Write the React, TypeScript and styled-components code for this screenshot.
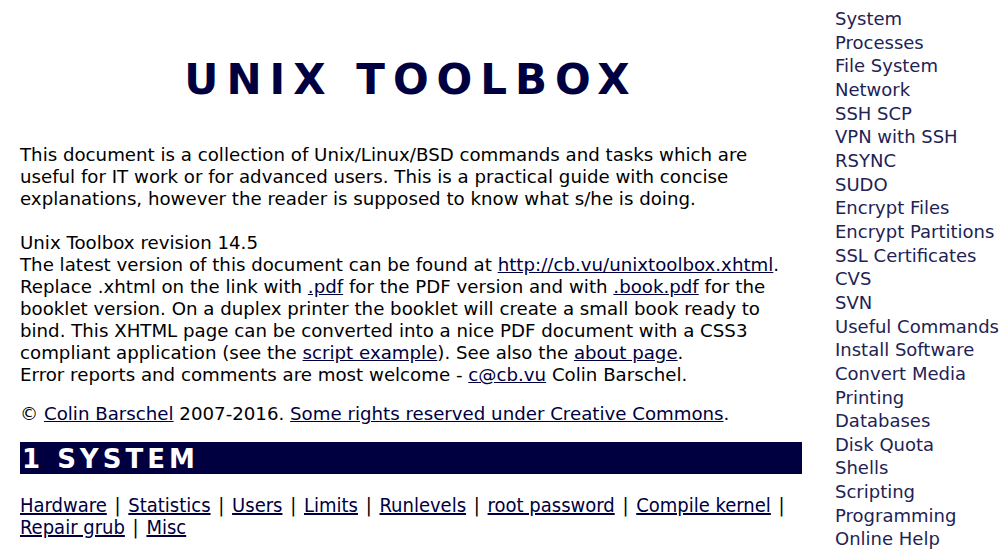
import styled, { createGlobalStyle } from 'styled-components';

const GlobalStyle = createGlobalStyle`
  html, body {
    margin: 0;
    padding: 0;
    background: #ffffff;
  }
  body {
    font-family: 'DejaVu Sans', Verdana, sans-serif;
    color: #000000;
  }
`;

const Page = styled.div`
  display: flex;
  width: 1006px;
  height: 552px;
  overflow: hidden;
`;

const Main = styled.div`
  width: 782px;
  flex-shrink: 0;
  margin-left: 20px;
  font-size: 18.2px;
  line-height: 22px;
`;

const Title = styled.h1`
  margin: 56px 0 40px;
  text-align: center;
  font-size: 42px;
  line-height: 48px;
  font-weight: bold;
  letter-spacing: 8px;
  color: #000040;
`;

const Para = styled.p<{ $gap?: number }>`
  margin: 0 0 ${(p) => p.$gap ?? 22}px;
`;

const Link = styled.a`
  color: #000040;
  text-decoration: underline;
`;

const SectionBar = styled.h2`
  margin: 0 0 20px;
  height: 32px;
  background: #000040;
  color: #ffffff;
  font-size: 26px;
  line-height: 34px;
  font-weight: bold;
  letter-spacing: 4px;
  padding-left: 2px;
`;

const SubNav = styled.div`
  font-family: 'DejaVu Sans Condensed', 'DejaVu Sans', sans-serif;
  font-stretch: condensed;
  font-size: 20px;
  line-height: 22px;
  a {
    color: #000040;
  }
`;

const Sep = styled.span`
  margin: 0 2px;
`;

const Sidebar = styled.nav`
  display: flex;
  flex-direction: column;
  margin-left: 33px;
  padding-top: 7px;
`;

const SideLink = styled.a`
  color: #222255;
  text-decoration: none;
  font-size: 18px;
  line-height: 23.65px;
  white-space: nowrap;
`;

const sideItems = [
  'System',
  'Processes',
  'File System',
  'Network',
  'SSH SCP',
  'VPN with SSH',
  'RSYNC',
  'SUDO',
  'Encrypt Files',
  'Encrypt Partitions',
  'SSL Certificates',
  'CVS',
  'SVN',
  'Useful Commands',
  'Install Software',
  'Convert Media',
  'Printing',
  'Databases',
  'Disk Quota',
  'Shells',
  'Scripting',
  'Programming',
  'Online Help',
];

const systemLinks = [
  'Hardware',
  'Statistics',
  'Users',
  'Limits',
  'Runlevels',
  'root password',
  'Compile kernel',
  'Repair grub',
  'Misc',
];

const App = () => {
  return (
    <>
      <GlobalStyle />
      <Page>
        <Main>
          <Title>UNIX TOOLBOX</Title>
          <Para>
            This document is a collection of Unix/Linux/BSD commands and tasks which are
            useful for IT work or for advanced users. This is a practical guide with concise
            explanations, however the reader is supposed to know what s/he is doing.
          </Para>
          <Para $gap={17}>
            Unix Toolbox revision 14.5
            <br />
            The latest version of this document can be found at{' '}
            <Link href="#">http://cb.vu/unixtoolbox.xhtml</Link>. Replace .xhtml on the link
            with <Link href="#">.pdf</Link> for the PDF version and with{' '}
            <Link href="#">.book.pdf</Link> for the booklet version. On a duplex printer the
            booklet will create a small book ready to bind. This XHTML page can be converted
            into a nice PDF document with a CSS3 compliant application (see the{' '}
            <Link href="#">script example</Link>). See also the <Link href="#">about page</Link>.
            <br />
            Error reports and comments are most welcome - <Link href="#">c@cb.vu</Link> Colin
            Barschel.
          </Para>
          <Para $gap={17}>
            © <Link href="#">Colin Barschel</Link> 2007-2016.{' '}
            <Link href="#">Some rights reserved under Creative Commons</Link>.
          </Para>
          <SectionBar>1 SYSTEM</SectionBar>
          <SubNav>
            {systemLinks.map((l, i) => (
              <span key={l}>
                <a href="#">{l}</a>
                {i < systemLinks.length - 1 ? (
                  <>
                    {' '}
                    <Sep>|</Sep>{' '}
                  </>
                ) : null}
              </span>
            ))}
          </SubNav>
        </Main>
        <Sidebar>
          {sideItems.map((s) => (
            <SideLink key={s} href="#">
              {s}
            </SideLink>
          ))}
        </Sidebar>
      </Page>
    </>
  );
};

export default App;
